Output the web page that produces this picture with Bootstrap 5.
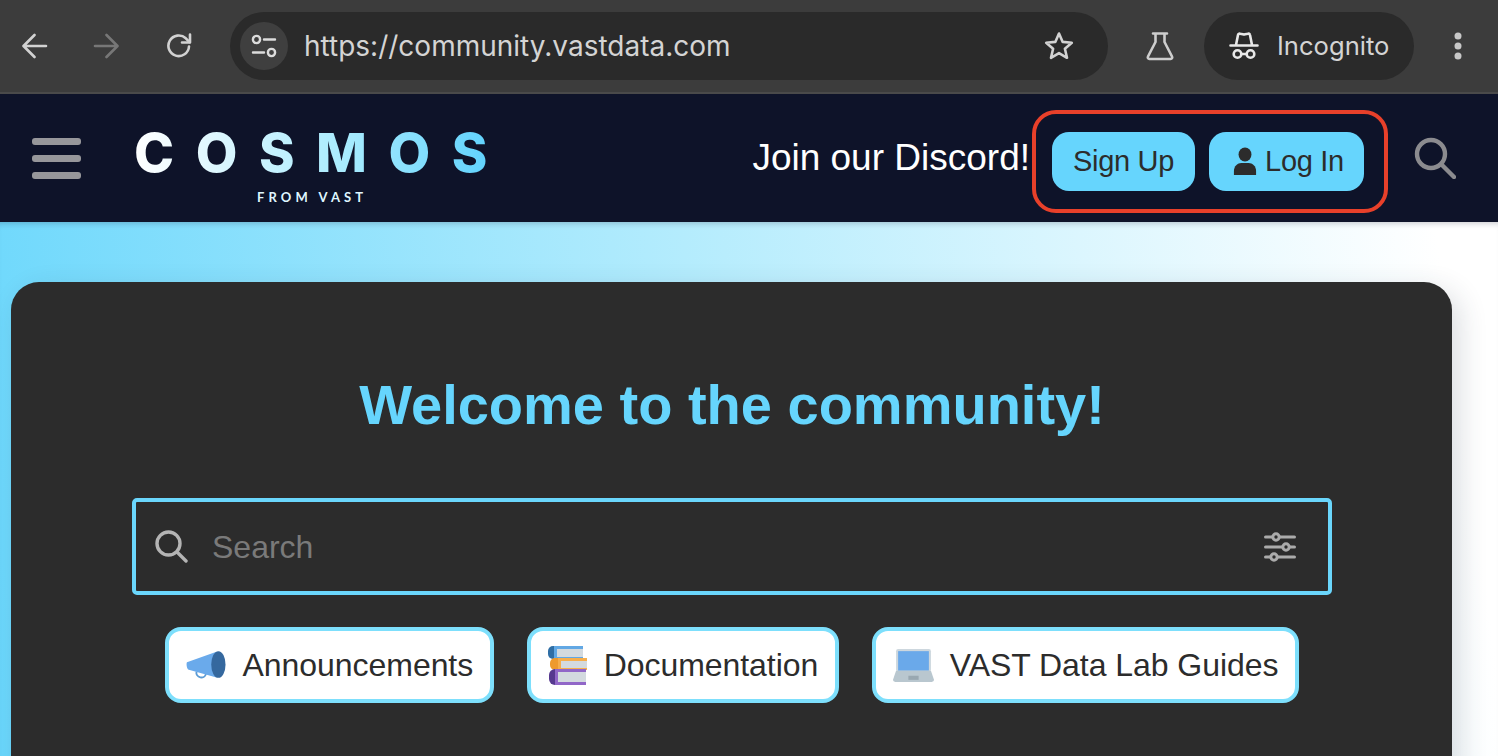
<!DOCTYPE html>
<html lang="en">
<head>
    <meta charset="UTF-8">
    <meta name="viewport" content="width=device-width, initial-scale=1.0">
    <title>Cosmos Community</title>
    <link href="https://cdn.jsdelivr.net/npm/bootstrap@5.3.3/dist/css/bootstrap.min.css" rel="stylesheet">
    <style>
        html, body { height: 756px; overflow: hidden; }
        body { background: #0e1329; font-family: "Liberation Sans", Arial, sans-serif; }
        .browser-bar { height: 94px; background: #3c3c3c; border-bottom: 2px solid #4a4a4a; padding: 12px 0 0 22px; font-family: Inter, Roboto, sans-serif; color: #d4d4d4; }
        .browser-bar svg { display: block; flex: none; }
        .bar-slot { height: 68px; }
        .fwd-icon { margin-left: 45px; }
        .reload-icon { margin-left: 47px; }
        .omnibox { width: 878px; height: 68px; margin-left: 38px; padding: 0 33px 0 10px; background: #2a2a2a; border-radius: 34px; }
        .site-chip { width: 48px; height: 48px; background: #3f3f3f; border-radius: 50%; }
        .url-text { margin-left: 16px; font-size: 28px; }
        .flask-slot { margin-left: 37px; }
        .incognito-pill { width: 210px; height: 68px; margin-left: 29px; padding-left: 25px; background: #2a2a2a; border-radius: 34px; font-size: 25.6px; }
        .incognito-label { margin-left: 18px; }
        .dots-slot { margin-left: 38px; }
        .site-header { height: 128px; background: #0e1329; padding-left: 32px; }
        .burger { width: 49px; }
        .burger span { display: block; height: 7px; margin: 10px 0; background: #97979b; border-radius: 3px; }
        .logo-box { margin-left: 53px; width: 353px; padding-top: 17px; }
        .logo-word { font-family: Inter, sans-serif; font-weight: 800; font-size: 54px; line-height: 48px; letter-spacing: 21.5px; white-space: nowrap; background: linear-gradient(90deg, #fff 0%, #a8ebfe 60%, #62d3fd 100%); -webkit-background-clip: text; background-clip: text; color: transparent; }
        .logo-sub { margin-top: 13px; margin-left: 123px; font-family: Lato, sans-serif; font-weight: 700; font-size: 13px; line-height: 14px; letter-spacing: 4.1px; color: #dff6ff; white-space: nowrap; }
        .discord-text { margin-left: auto; color: #fff; font-size: 37px; line-height: 40px; white-space: nowrap; }
        .callout { width: 356px; height: 103px; margin: 6px 0 0 2px; padding-left: 16px; border: 4px solid #e8402a; border-radius: 24px; gap: 14px; }
        .cta-btn { height: 59px; padding: 0 21px; background: #66d5fd; border: 0; border-radius: 17px; color: #2c2c2c; font-size: 29px; line-height: 1; letter-spacing: -.3px; }
        .cta-btn:hover { background: #66d5fd; color: #2c2c2c; }
        .login-btn { padding: 0 20px 0 24px; gap: 8px; }
        .header-search { margin-left: 26px; margin-right: 42px; }
        .page-area { height: 534px; padding: 60px 46px 0 11px; background: linear-gradient(82deg, #6ad7fc 0%, #b4ecfd 48%, #fff 96%); box-shadow: inset 0 6px 6px -5px rgba(14, 19, 41, .25); }
        .hero-panel { height: 560px; padding: 92px 120px 0 121px; background: #2c2c2c; border-radius: 28px; box-shadow: 8px 8px 28px rgba(40, 50, 70, .16); }
        .hero-title { margin: 0 0 62px; color: #66d5fd; font-family: "Liberation Sans", Arial, sans-serif; font-weight: 700; font-size: 56px; line-height: 62px; text-align: center; }
        .search-field { height: 97px; padding: 0 32px 0 19px; border: 4px solid #6ad6fc; border-radius: 5px; color: #7a7a7a; font-size: 32px; }
        .search-label { margin-left: 24px; }
        .quick-links { margin-top: 32px; gap: 32.5px; }
        .quick-chip { height: 76px; padding: 0 17px; background: #fff; border: 4px solid #7ddffc; border-radius: 16px; color: #2c2c2c; font-size: 32px; letter-spacing: -.05px; white-space: nowrap; text-decoration: none; }
        .quick-chip:hover { color: #2c2c2c; }
        .chip-text { margin-left: 17px; }
        .chip-text-tight { margin-left: 16px; }
    </style>
</head>
<body>
    <div class="browser-bar d-flex align-items-start">
        <div class="bar-slot d-flex align-items-center">
            <svg width="26" height="26" viewBox="0 0 26 26" fill="none" stroke="#d2d2d2" stroke-width="2.6" stroke-linecap="round" stroke-linejoin="round"><path d="M24 13H2.5M12.5 2 1.5 13l11 11"/></svg>
            <svg class="fwd-icon" width="26" height="26" viewBox="0 0 26 26" fill="none" stroke="#777" stroke-width="2.6" stroke-linecap="round" stroke-linejoin="round"><path d="M2 13h21.5M13.5 2l11 11-11 11"/></svg>
            <svg class="reload-icon" width="26" height="26" viewBox="0 0 26 26" fill="none" stroke="#d2d2d2" stroke-width="2.6" stroke-linecap="round" stroke-linejoin="round"><path d="M23 13.5A10.3 10.3 0 1 1 19.8 5.3L23.5 9"/><path d="M24 1.5V9.5H16"/></svg>
        </div>
        <div class="omnibox d-flex align-items-center">
            <div class="site-chip d-flex align-items-center justify-content-center">
                <svg width="26" height="26" viewBox="0 0 26 26" fill="none" stroke="#dcdcdc" stroke-width="2.4" stroke-linecap="round"><circle cx="5.5" cy="6.5" r="3.6"/><path d="M13 6.5h11M2 19.5h11"/><circle cx="20.5" cy="19.5" r="3.6"/></svg>
            </div>
            <span class="url-text">https://community.vastdata.com</span>
            <svg class="ms-auto" width="32" height="32" viewBox="0 0 32 32" fill="none" stroke="#d2d2d2" stroke-width="2.6" stroke-linejoin="round"><path d="M16 3.5l3.7 8.4 9.1.9-6.9 6 2.1 9-8-4.7-8 4.7 2.1-9-6.9-6 9.1-.9z"/></svg>
        </div>
        <div class="flask-slot bar-slot d-flex align-items-center">
            <svg width="30" height="30" viewBox="0 0 30 30" fill="none" stroke="#cdcdcd" stroke-width="2.6" stroke-linecap="round" stroke-linejoin="round"><path d="M8 2.5h14M10.5 2.5V11L3 25.5c-.6 1.2.1 2.5 1.4 2.5h21.2c1.3 0 2-1.3 1.4-2.5L19.5 11V2.5"/></svg>
        </div>
        <div class="incognito-pill d-flex align-items-center">
            <svg width="30" height="30" viewBox="0 0 30 30" fill="none" stroke="#e8e8e8" stroke-width="2.6" stroke-linecap="round" stroke-linejoin="round"><path d="M1.5 14.5h27M7 14 9 4c.2-1 1.2-1.6 2.2-1.3L15 3.6l3.8-.9c1-.3 2-.3 2.2 1.3L23 14"/><circle cx="8.5" cy="23" r="3.8"/><circle cx="21.5" cy="23" r="3.8"/><path d="M12.5 23h5"/></svg>
            <span class="incognito-label">Incognito</span>
        </div>
        <div class="dots-slot bar-slot d-flex align-items-center">
            <svg width="12" height="28" viewBox="0 0 12 28" fill="#c8c8c8"><circle cx="6" cy="4" r="3.5"/><circle cx="6" cy="14" r="3.5"/><circle cx="6" cy="24" r="3.5"/></svg>
        </div>
    </div>

    <header class="site-header d-flex align-items-center">
        <div class="burger"><span></span><span></span><span></span></div>
        <div class="logo-box">
            <div class="logo-word">COSMOS</div>
            <div class="logo-sub">FROM VAST</div>
        </div>
        <span class="discord-text">Join our Discord!</span>
        <div class="callout d-flex align-items-center">
            <button type="button" class="btn cta-btn">Sign Up</button>
            <button type="button" class="btn cta-btn login-btn d-flex align-items-center">
                <svg width="24" height="28" viewBox="0 0 26 28" fill="#2c2c2c" preserveAspectRatio="none"><circle cx="13" cy="7.5" r="7"/><path d="M1 28v-4c0-5 4-8 8-8h8c4 0 8 3 8 8v4z"/></svg>
                <span>Log In</span>
            </button>
        </div>
        <svg class="header-search" width="42" height="42" viewBox="0 0 42 42" fill="none" stroke="#8b8b8f" stroke-width="4.4" stroke-linecap="round"><circle cx="17" cy="17" r="14"/><path d="M27.5 27.5 40 40"/></svg>
    </header>

    <main class="page-area">
        <section class="hero-panel">
            <h1 class="hero-title">Welcome to the community!</h1>
            <div class="search-field d-flex align-items-center">
                <svg width="33" height="33" viewBox="0 0 33 33" fill="none" stroke="#b4b4b4" stroke-width="3.4" stroke-linecap="round"><circle cx="13.5" cy="13.5" r="11.5"/><path d="M22 22 31 31"/></svg>
                <span class="search-label">Search</span>
                <svg class="ms-auto" width="32" height="30" viewBox="0 0 32 30" fill="none" stroke="#ababab" stroke-width="3" stroke-linecap="round"><path d="M1.5 5h29M1.5 15h29M1.5 25h29"/><circle cx="12" cy="5" r="3.2" fill="#2c2c2c"/><circle cx="22" cy="15" r="3.2" fill="#2c2c2c"/><circle cx="10" cy="25" r="3.2" fill="#2c2c2c"/></svg>
            </div>
            <div class="quick-links d-flex justify-content-center">
                <a class="quick-chip d-flex align-items-center" href="#">
                    <svg width="40" height="30" viewBox="0 0 42 30"><path d="M11 22a5 5 0 0 0 10 2" fill="none" stroke="#5b9bd5" stroke-width="2"/><path d="M1 12 32 1v27L3 20c-2-.5-3-6-2-8z" fill="#6aaaeb"/><ellipse cx="34" cy="14.5" rx="7.5" ry="14" fill="#35689e"/></svg>
                    <span class="chip-text">Announcements</span>
                </a>
                <a class="quick-chip d-flex align-items-center" href="#">
                    <svg width="39" height="40" viewBox="0 0 39 40">
                        <rect x="0" y="1" width="35" height="13" rx="5" fill="#2f6ea5"/><rect x="6" y="1" width="29" height="13" fill="#62a8e4"/><rect x="9" y="4" width="26" height="8" fill="#d3dadf"/>
                        <rect x="2" y="13" width="37" height="12" rx="5" fill="#ee9a2e"/><rect x="10" y="13" width="29" height="12" fill="#f6ae4c"/><rect x="13" y="16" width="26" height="7" fill="#d3dadf"/>
                        <rect x="1" y="24" width="37" height="16" rx="6" fill="#56398f"/><rect x="7" y="24" width="31" height="16" fill="#9167c8"/><rect x="10" y="27" width="28" height="10" fill="#d3dadf"/>
                    </svg>
                    <span class="chip-text">Documentation</span>
                </a>
                <a class="quick-chip d-flex align-items-center" href="#">
                    <svg width="41" height="33" viewBox="0 0 40 32"><rect x="3" y="0" width="34" height="22" rx="2" fill="#cdd7de"/><rect x="5" y="2" width="30" height="19" fill="#6aa9ea"/><path d="M3 21h34l3 9c0 1-1 2-2 2H2c-1 0-2-1-2-2z" fill="#b9c7cf"/><rect x="15" y="26" width="10" height="4" fill="#99a8b1"/></svg>
                    <span class="chip-text-tight">VAST Data Lab Guides</span>
                </a>
            </div>
        </section>
    </main>
    <script src="https://cdn.jsdelivr.net/npm/bootstrap@5.3.3/dist/js/bootstrap.bundle.min.js"></script>
</body>
</html>
